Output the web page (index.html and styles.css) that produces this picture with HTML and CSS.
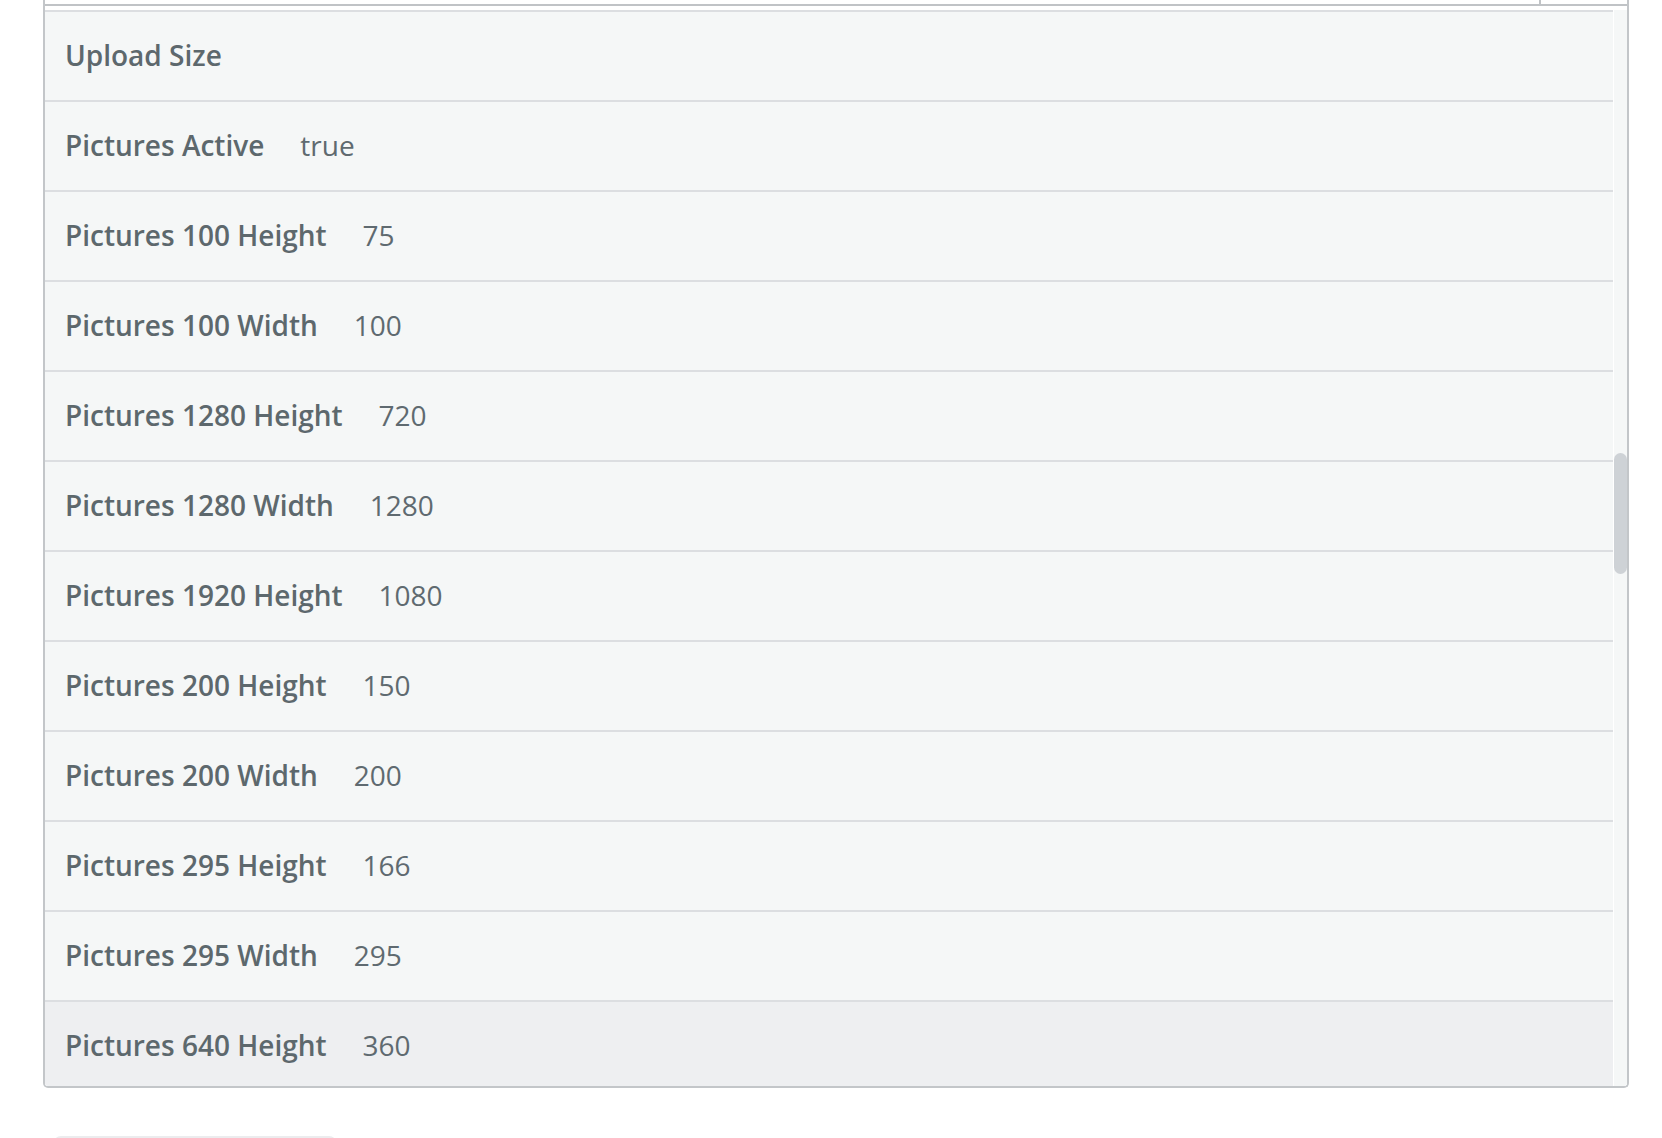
FILE: index.html
```html
<!DOCTYPE html>
<html lang="en">
<head>
<meta charset="utf-8">
<title>Settings</title>
<link rel="stylesheet" href="styles.css">
</head>
<body>
<div class="page">
  <div class="panel">
    <div class="panel-head">
      <div class="head-cell"></div>
      <div class="head-cell last"></div>
    </div>
    <div class="panel-body">
      <ul class="list">
        <li class="row"><span class="key">Upload Size</span></li>
        <li class="row"><span class="key">Pictures Active</span><span class="val">true</span></li>
        <li class="row"><span class="key">Pictures 100 Height</span><span class="val">75</span></li>
        <li class="row"><span class="key">Pictures 100 Width</span><span class="val">100</span></li>
        <li class="row"><span class="key">Pictures 1280 Height</span><span class="val">720</span></li>
        <li class="row"><span class="key">Pictures 1280 Width</span><span class="val">1280</span></li>
        <li class="row"><span class="key">Pictures 1920 Height</span><span class="val">1080</span></li>
        <li class="row"><span class="key">Pictures 200 Height</span><span class="val">150</span></li>
        <li class="row"><span class="key">Pictures 200 Width</span><span class="val">200</span></li>
        <li class="row"><span class="key">Pictures 295 Height</span><span class="val">166</span></li>
        <li class="row"><span class="key">Pictures 295 Width</span><span class="val">295</span></li>
        <li class="row hover"><span class="key">Pictures 640 Height</span><span class="val">360</span></li>
      </ul>
      <div class="track"><div class="thumb"></div></div>
    </div>
  </div>
  <div class="more-btn"></div>
</div>
</body>
</html>
```

FILE: styles.css
```css
html, body {
  margin: 0;
  padding: 0;
  background: #ffffff;
  overflow: hidden;
  height: 1138px;
}

body {
  font-family: "Open Sans", "Noto Sans", sans-serif;
  color: #5d686d;
}

.page {
  padding-left: 43px;
  width: 1586px;
}

.panel {
  border: 2px solid #c3c6c9;
  border-top: none;
  border-radius: 0 0 5px 5px;
  overflow: hidden;
}

.panel-head {
  display: flex;
  height: 4px;
  border-bottom: 2px solid #c0c3c6;
  background: #ffffff;
}

.head-cell {
  width: 1494px;
  border-right: 2px solid #c0c3c6;
}

.head-cell.last {
  flex: 1;
  border-right: none;
}

.panel-body {
  display: flex;
  padding-top: 4px;
  height: 1076px;
  background: #ffffff;
}

.list {
  list-style: none;
  margin: 0;
  padding: 0;
  width: 1568px;
  height: 1076px;
  overflow: hidden;
  background: #f5f7f7;
}

.row {
  display: flex;
  align-items: center;
  box-sizing: border-box;
  height: 90px;
  border-top: 2px solid #dcdee1;
  padding-left: 20px;
  padding-bottom: 2px;
  font-size: 28px;
  background: #f5f7f7;
}

.row.hover {
  background: #eeeff1;
}

.key {
  font-weight: 600;
  color: #5d686d;
}

.val {
  margin-left: 36px;
  font-weight: 400;
  color: #5f6a70;
}

.track {
  position: relative;
  width: 13px;
  border-left: 1px solid #ffffff;
  background: #f5f7f7;
}

.thumb {
  position: absolute;
  left: 0;
  right: 0;
  top: 443px;
  height: 121px;
  border-radius: 7px;
  background: #ced2d6;
}

.more-btn {
  margin: 48px 0 0 10px;
  width: 280px;
  height: 40px;
  border: 2px solid #ececee;
  border-radius: 8px;
}
```
